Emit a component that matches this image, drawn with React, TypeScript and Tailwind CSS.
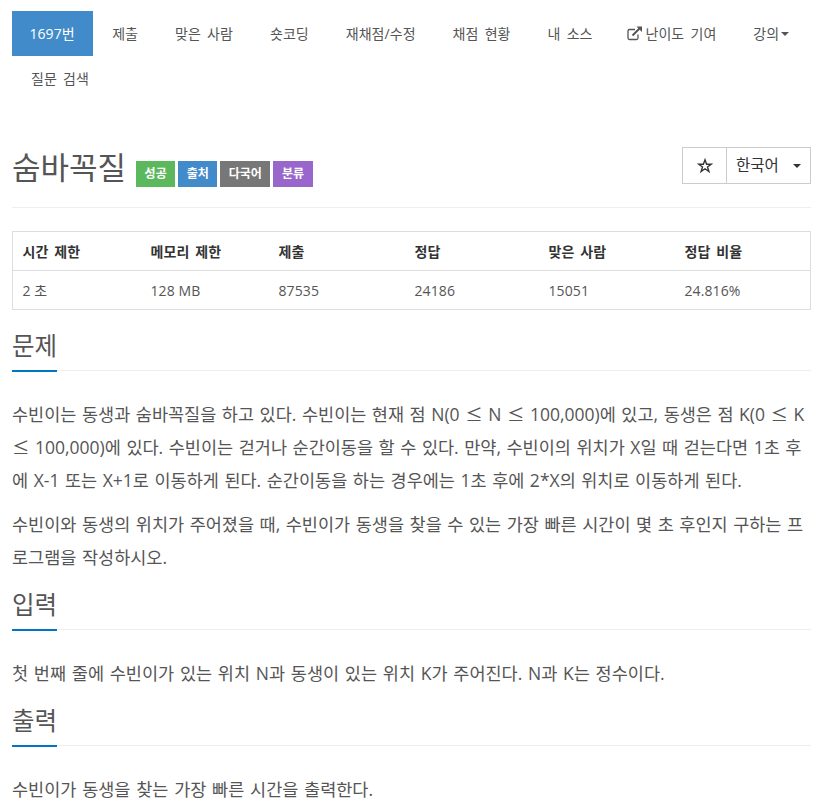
const navItems = ['제출', '맞은 사람', '숏코딩', '재채점/수정', '채점 현황', '내 소스']

const stats = [
  { label: '시간 제한', value: '2 초', width: 'w-[128px]' },
  { label: '메모리 제한', value: '128 MB', width: 'w-[128px]' },
  { label: '제출', value: '87535', width: 'w-[136px]' },
  { label: '정답', value: '24186', width: 'w-[134px]' },
  { label: '맞은 사람', value: '15051', width: 'w-[136px]' },
  { label: '정답 비율', value: '24.816%', width: 'flex-1' },
]

function SectionTitle({ children }: { children: string }) {
  return (
    <div className="flex items-start border-b border-[#eeeeee] h-[41px]">
      <h2 className="text-[24.5px] leading-[32px] text-[#555555] h-[42px] border-b-2 border-[#0076c0]">
        {children}
      </h2>
    </div>
  )
}

function Label({ color, children }: { color: string; children: string }) {
  return (
    <span className={`${color} text-white text-[12px] font-bold leading-[26px] h-[26px] px-[8.5px] inline-block`}>
      {children}
    </span>
  )
}

function Le() {
  return <span className="font-['Noto_Sans_CJK_KR',sans-serif] leading-[0]">≤</span>
}

function LinkIcon() {
  return (
    <svg width="16" height="15" viewBox="0 0 16 15" fill="none" className="ml-[-3px]">
      <path d="M8 3.5H2.5a1.5 1.5 0 0 0-1.5 1.5v7a1.5 1.5 0 0 0 1.5 1.5h7A1.5 1.5 0 0 0 11 12V8.5" stroke="#555555" strokeWidth="1.3" />
      <path d="M5.5 9.5L12.5 2.5" stroke="#555555" strokeWidth="1.9" />
      <path d="M9.5 0.5H15V6z" fill="#555555" />
    </svg>
  )
}

function StarIcon() {
  return (
    <svg width="16" height="16" viewBox="0 0 16 16" fill="none">
      <path d="M8 1.8L9.6 6.2H14.3L10.5 9L11.9 13.6L8 10.8L4.1 13.6L5.5 9L1.7 6.2H6.4z" stroke="#333333" strokeWidth="1.4" strokeLinejoin="miter" />
    </svg>
  )
}

export default function App() {
  return (
    <div className="w-[829px] h-[808px] overflow-hidden bg-white text-[#555555] text-[15px] font-['Open_Sans','Noto_Sans_CJK_KR',sans-serif]">
      <div className="pl-3 pr-[18px]">
        {/* 상단 메뉴 */}
        <nav className="pt-[11px] mr-[-6px] flex flex-wrap gap-x-[3px] text-[14px] tracking-[0.05px] [word-spacing:2.5px] text-[#555555] h-[90px] box-content">
          <a className="h-[45px] pl-[17.5px] pr-[18.5px] mr-[-1px] leading-[45px] bg-[#428bca] text-white">1697번</a>
          {navItems.map((item) => (
            <a key={item} className="h-[45px] px-[17px] leading-[45px]">{item}</a>
          ))}
          <a className="h-[45px] px-[17px] leading-[45px] flex items-center gap-[3px]">
            <LinkIcon />
            난이도 기여
          </a>
          <a className="h-[45px] px-[17px] leading-[45px] flex items-center gap-[2px]">
            강의
            <span className="w-0 h-0 border-x-4 border-x-transparent border-t-4 border-t-[#555555]" />
          </a>
          <a className="h-[45px] px-[17px] ml-[2px] leading-[45px]">질문 검색</a>
        </nav>

        {/* 제목 */}
        <div className="mt-[45px] h-[62px] border-b border-[#eeeeee] flex justify-between">
          <div className="flex items-start">
            <h1 className="text-[31px] leading-[42px] text-[#555555] mr-[10px]">숨바꼭질</h1>
            <div className="flex gap-[3px] mt-[15px]">
              <Label color="bg-[#5cb85c]">성공</Label>
              <Label color="bg-[#428bca]">출처</Label>
              <Label color="bg-[#777777]">다국어</Label>
              <Label color="bg-[#9966cc]">분류</Label>
            </div>
          </div>
          <div className="flex h-[37px] mt-[1px] border border-[#cccccc] text-[15.5px] text-[#333333]">
            <div className="w-[44px] border-r border-[#cccccc] flex items-center justify-center">
              <StarIcon />
            </div>
            <div className="w-[83px] pl-[9px] flex items-center">
              한국어
              <span className="ml-[14px] w-0 h-0 border-x-4 border-x-transparent border-t-4 border-t-[#333333]" />
            </div>
          </div>
        </div>

        {/* 제한 표 */}
        <div className="mt-[23px] border border-[#dddddd] text-[14px] tracking-[0.1px]">
          <div className="flex h-[39px] items-center border-b border-[#dddddd] font-bold text-[#333333] [word-spacing:2px]">
            {stats.map((s) => (
              <div key={s.label} className={`${s.width} pl-[9.5px]`}>{s.label}</div>
            ))}
          </div>
          <div className="flex h-[38px] items-center">
            {stats.map((s) => (
              <div key={s.label} className={`${s.width} pl-[9.5px]`}>{s.value}</div>
            ))}
          </div>
        </div>

        {/* 문제 */}
        <div className="mt-[20px]"><SectionTitle>문제</SectionTitle></div>
        <div className="mt-[27px] text-[17.5px] leading-[33px] [word-spacing:1px] text-[#555555]">
          <p className="mb-[11px]">
            수빈이는 동생과 숨바꼭질을 하고 있다. 수빈이는 현재 점 N(0 <Le /> N <Le /> 100,000)에 있고, 동생은 점 K(0 <Le /> K <Le /> 100,000)에 있다. 수빈이는 걷거나 순간이동을 할 수 있다. 만약, 수빈이의 위치가 X일 때 걷는다면 1초 후에 X-1 또는 X+1로 이동하게 된다. 순간이동을 하는 경우에는 1초 후에 2*X의 위치로 이동하게 된다.
          </p>
          <p>
            수빈이와 동생의 위치가 주어졌을 때, 수빈이가 동생을 찾을 수 있는 가장 빠른 시간이 몇 초 후인지 구하는 프로그램을 작성하시오.
          </p>
        </div>

        {/* 입력 */}
        <div className="mt-[15px]"><SectionTitle>입력</SectionTitle></div>
        <p className="mt-[27px] text-[17.5px] leading-[33px] [word-spacing:1.2px] text-[#555555]">
          첫 번째 줄에 수빈이가 있는 위치 N과 동생이 있는 위치 K가 주어진다. N과 K는 정수이다.
        </p>

        {/* 출력 */}
        <div className="mt-[15px]"><SectionTitle>출력</SectionTitle></div>
        <p className="mt-[27px] text-[17.5px] leading-[33px] [word-spacing:1.2px] text-[#555555]">
          수빈이가 동생을 찾는 가장 빠른 시간을 출력한다.
        </p>
      </div>
    </div>
  )
}
